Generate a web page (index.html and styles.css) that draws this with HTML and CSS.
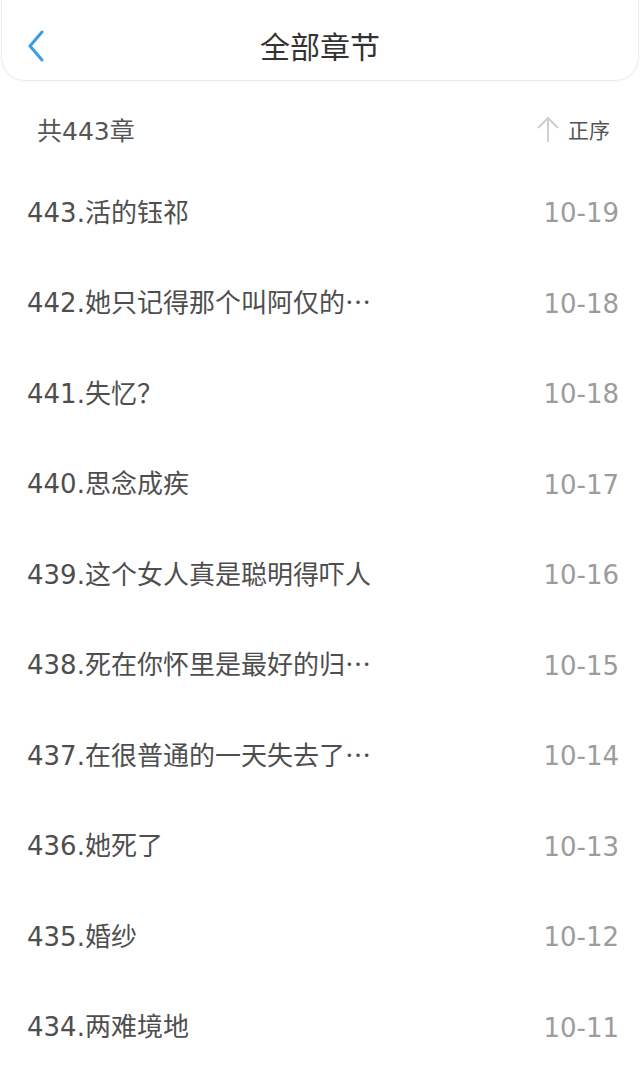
FILE: index.html
```html
<!DOCTYPE html>
<html lang="zh-CN">
<head>
    <meta charset="UTF-8">
    <meta name="viewport" content="width=device-width, initial-scale=1.0">
    <title>全部章节</title>
    <link rel="stylesheet" href="styles.css">
</head>
<body>
    <div class="header">
        <span class="back">
            <svg width="18" height="32" viewBox="0 0 18 32"><path d="M15 2 L3 16 L15 30" fill="none" stroke="#3a9de3" stroke-width="3" stroke-linecap="round" stroke-linejoin="round"/></svg>
        </span>
        <div class="title">全部章节</div>
    </div>

    <div class="summary">
        <span class="count">共443章</span>
        <span class="order">
            <svg width="24" height="28" viewBox="0 0 24 28"><path d="M12 27 V3 M2 13 L12 3 L22 13" fill="none" stroke="#cfcfcf" stroke-width="2"/></svg>
            正序
        </span>
    </div>

    <div class="chapters" id="chapters"></div>

    <script>
        const chapters = [
            ["443.活的钰祁", "10-19"],
            ["442.她只记得那个叫阿仅的…", "10-18"],
            ["441.失忆？", "10-18"],
            ["440.思念成疾", "10-17"],
            ["439.这个女人真是聪明得吓人", "10-16"],
            ["438.死在你怀里是最好的归…", "10-15"],
            ["437.在很普通的一天失去了…", "10-14"],
            ["436.她死了", "10-13"],
            ["435.婚纱", "10-12"],
            ["434.两难境地", "10-11"]
        ];
        const list = document.getElementById("chapters");
        chapters.forEach(([name, date]) => {
            let row = document.createElement("div");
            row.classList.add("chapter");
            let label = name.replace("…", '<span class="more">…</span>').replace("？", '<span class="more">？</span>');
            row.innerHTML = `<span class="name">${label}</span><span class="date">${date}</span>`;
            list.appendChild(row);
        });
    </script>
</body>
</html>
```

FILE: styles.css
```css
body {
    margin: 0;
    background-color: #fff;
    font-family: "DejaVu Sans", "Noto Sans CJK SC", sans-serif;
    color: #4a4a4a;
    overflow: hidden;
}
.header {
    height: 80px;
    margin: 0 1px;
    border: 1px solid #ececec;
    border-top: none;
    border-radius: 0 0 24px 24px;
    box-shadow: 0 1px 3px rgba(0, 0, 0, 0.04);
    display: flex;
    align-items: center;
    justify-content: center;
    position: relative;
}
.back {
    position: absolute;
    left: 25px;
    top: 30px;
    display: flex;
}
.title {
    font-family: "Noto Sans CJK SC", sans-serif;
    font-size: 30px;
    color: #333;
    padding-top: 10px;
}
.summary {
    height: 73px;
    padding: 11px 30px 0 37px;
    display: flex;
    align-items: center;
    justify-content: space-between;
}
.count {
    font-size: 25px;
    color: #555;
}
.order {
    display: flex;
    align-items: center;
    gap: 8px;
    font-family: "Noto Sans CJK SC", sans-serif;
    font-size: 21px;
    color: #555;
}
.chapter {
    height: 90.5px;
    padding: 0 21px 0 27px;
    display: flex;
    align-items: center;
    justify-content: space-between;
}
.name {
    font-size: 26px;
    color: #4e4e4e;
}
.more {
    font-family: "Noto Sans CJK SC", sans-serif;
}
.date {
    padding-top: 6px;
    font-size: 26px;
    color: #9c9c9c;
}
```
